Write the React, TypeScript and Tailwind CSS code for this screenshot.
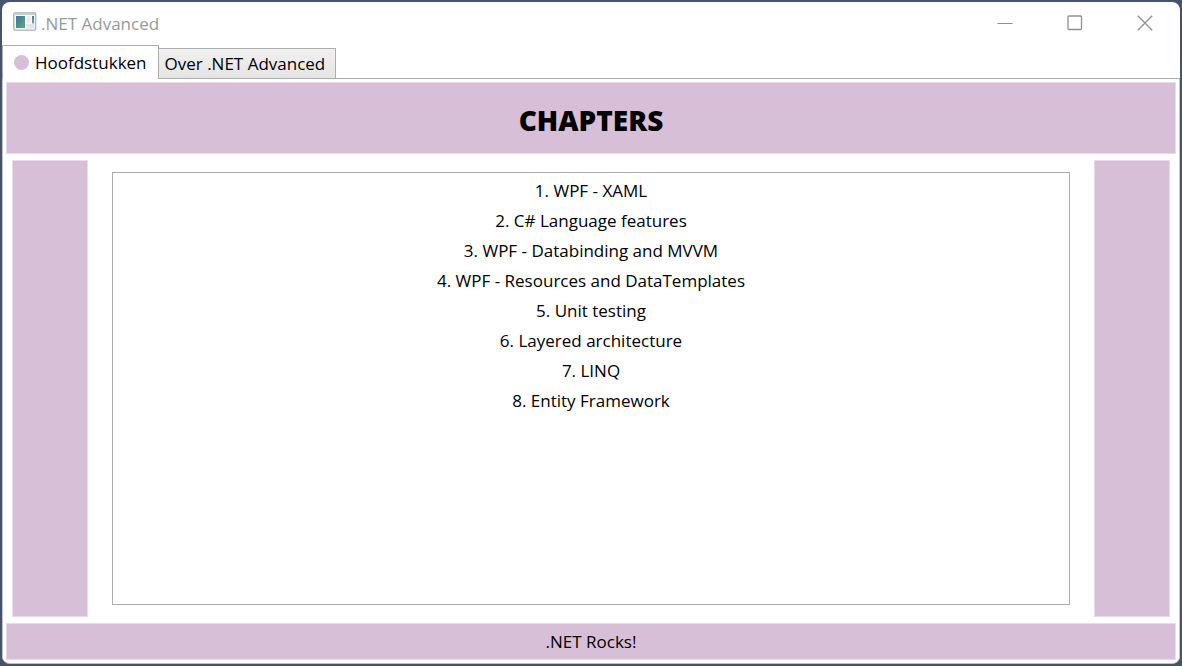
import { useState } from "react";

const chapters = [
  "1. WPF - XAML",
  "2. C# Language features",
  "3. WPF - Databinding and MVVM",
  "4. WPF - Resources and DataTemplates",
  "5. Unit testing",
  "6. Layered architecture",
  "7. LINQ",
  "8. Entity Framework",
];

function AppIcon() {
  return (
    <svg width="24" height="20" viewBox="0 0 24 20" aria-hidden="true">
      <defs>
        <linearGradient id="pane" x1="0" y1="0" x2="1" y2="1">
          <stop offset="0" stopColor="#3f78a4" />
          <stop offset="0.5" stopColor="#489089" />
          <stop offset="1" stopColor="#5fae7c" />
        </linearGradient>
        <linearGradient id="bar" x1="0" y1="0" x2="0" y2="1">
          <stop offset="0" stopColor="#4574a8" />
          <stop offset="1" stopColor="#62b184" />
        </linearGradient>
      </defs>
      <rect x="0.75" y="0.75" width="22" height="17.5" rx="1.2" fill="#e6e8ea" stroke="#a9adb2" strokeWidth="1.2" />
      <rect x="1.5" y="1.3" width="20.5" height="1.7" fill="#c6cbd1" />
      <rect x="2" y="3" width="19.5" height="13.5" fill="#f8f9f9" />
      <rect x="3" y="4" width="9" height="12" fill="url(#pane)" />
      <rect x="13.5" y="4" width="4" height="7" fill="#e9ebed" />
      <rect x="13.5" y="12" width="8" height="4" fill="#e3e5e7" />
      <rect x="19" y="4" width="2" height="7.5" fill="url(#bar)" />
    </svg>
  );
}

export default function App() {
  const [tab, setTab] = useState(0);
  return (
    <div className="flex min-h-screen flex-col bg-[#46536b] p-0.5 font-['Open_Sans','Noto_Sans',sans-serif] text-[17px] leading-6 text-black">
      <div className="flex flex-1 flex-col overflow-hidden rounded-lg border-b border-[#c0c0c4] bg-white">
        <header className="flex h-[43px] items-start">
          <div className="flex flex-1 items-start gap-1 pt-2.5 pl-[11px] text-[#999999]">
            <AppIcon />
            <h1>.NET Advanced</h1>
          </div>
          <div className="flex text-[#909090]">
            <button type="button" aria-label="Minimize" className="flex h-[41px] w-[70px] items-center justify-center">
              <svg width="16" height="16" viewBox="0 0 16 16" fill="none" stroke="currentColor">
                <path d="M0.5 8.5H15.5" />
              </svg>
            </button>
            <button type="button" aria-label="Maximize" className="flex h-[41px] w-[70px] items-center justify-center">
              <svg width="16" height="16" viewBox="0 0 16 16" fill="none" stroke="currentColor" strokeWidth="1.3">
                <rect x="1" y="1" width="13.5" height="13.5" rx="1" />
              </svg>
            </button>
            <button type="button" aria-label="Close" className="flex h-[41px] w-[70px] items-center justify-center">
              <svg width="16" height="16" viewBox="0 0 16 16" fill="none" stroke="currentColor" strokeWidth="1.3">
                <path d="M0.8 0.8L15.2 15.2M15.2 0.8L0.8 15.2" />
              </svg>
            </button>
          </div>
        </header>

        <div role="tablist" className="flex h-[34px] items-end border-b border-[#acacac]">
          <button
            type="button"
            role="tab"
            aria-selected={tab === 0}
            onClick={() => setTab(0)}
            className="-mb-px flex h-[34px] items-center gap-1.5 border border-b-0 border-[#acacac] bg-white px-[11px]"
          >
            <span className="size-[15px] rounded-full bg-[#d8bfd8]" />
            Hoofdstukken
          </button>
          <button
            type="button"
            role="tab"
            aria-selected={tab === 1}
            onClick={() => setTab(1)}
            className="flex h-[30px] items-center border border-b-0 border-l-0 border-[#acacac] bg-linear-to-b from-[#f0f0f0] to-[#e5e5e5] pr-2.5 pl-1.5"
          >
            Over .NET Advanced
          </button>
        </div>

        <main className="flex flex-1 flex-col gap-1.5 border-x border-[#c4c4c6] p-[3px]">
          <div className="flex h-[72px] items-center justify-center border border-[#e9dcea] bg-[#d8bfd8]">
            <h2 className="pt-1 text-[28px] leading-8 font-extrabold">CHAPTERS</h2>
          </div>
          <div className="flex flex-1 gap-6 px-1.5">
            <div className="w-[76px] border border-[#e9dcea] bg-[#d8bfd8]" />
            <ul className="my-3 flex-1 border border-[#abadb3] pt-[3px] text-center">
              {chapters.map((chapter) => (
                <li key={chapter} className="leading-[30px]">
                  {chapter}
                </li>
              ))}
            </ul>
            <div className="w-[76px] border border-[#e9dcea] bg-[#d8bfd8]" />
          </div>
          <footer className="flex h-[37px] items-center justify-center border border-[#e9dcea] bg-[#d8bfd8]">
            .NET Rocks!
          </footer>
        </main>
      </div>
    </div>
  );
}
